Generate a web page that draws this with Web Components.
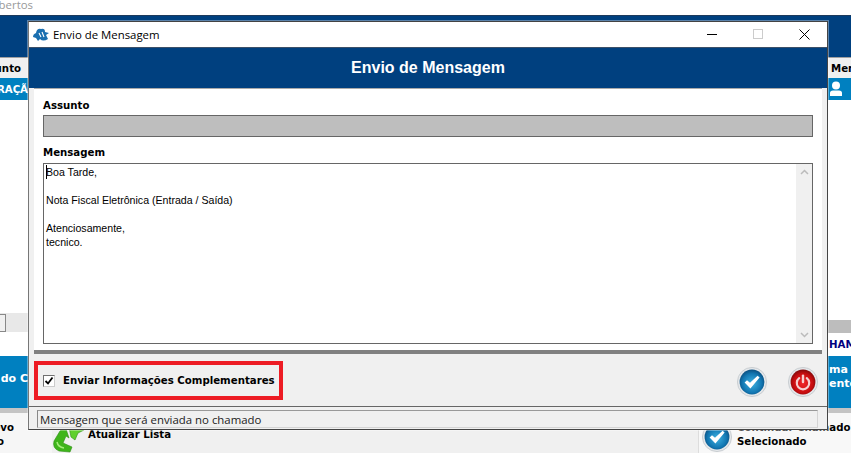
<!DOCTYPE html>
<html lang="pt-BR">
<head>
<meta charset="utf-8">
<title>Envio de Mensagem</title>
<style>
  html, body { margin: 0; padding: 0; background: #fff; }
  body { width: 851px; height: 453px; overflow: hidden; position: relative; font-family: "Liberation Sans", sans-serif; }
</style>
</head>
<body>
<app-backdrop></app-backdrop>
<message-dialog></message-dialog>

<script>
// round glossy button, blue check or red power
class RoundIcon extends HTMLElement {
  connectedCallback() {
    const kind = this.getAttribute("kind") || "ok";
    const glyph = kind === "ok"
      ? `<path d="M7.6 15.4 L10 13.2 L13 15.8 L20.6 8.8 L22.6 10.6 L13.4 21.4 Z" fill="#fff"/>`
      : `<path d="M11.2 11.2 A6.2 6.2 0 1 0 18.8 11.2" fill="none" stroke="#f6d0d0" stroke-width="2.2" stroke-linecap="round"/><path d="M15 8.6 V15" stroke="#f6d0d0" stroke-width="2.4" stroke-linecap="round"/>`;
    const stops = kind === "ok" ? ["#3fb2e2", "#1277b2", "#0a4f80"] : ["#f0282a", "#c80d10", "#800a0b"];
    const id = "g" + kind;
    this.attachShadow({ mode: "open" }).innerHTML = `
      <style>
        :host { display: block; width: 30px; height: 30px; flex: none; }
        svg { display: block; }
      </style>
      <svg width="30" height="30" viewBox="0 0 30 30">
        <defs>
          <radialGradient id="${id}" cx="50%" cy="55%" r="55%">
            <stop offset="0" stop-color="${stops[0]}"/>
            <stop offset=".7" stop-color="${stops[1]}"/>
            <stop offset="1" stop-color="${stops[2]}"/>
          </radialGradient>
        </defs>
        <circle cx="15" cy="15" r="14.6" fill="#e4e7ea" stroke="#bcc1c5" stroke-width=".7"/>
        <circle cx="15" cy="15" r="12.4" fill="url(#${id})"/>
        ${glyph}
      </svg>`;
  }
}
customElements.define("round-icon", RoundIcon);

// the main application window behind the dialog
class AppBackdrop extends HTMLElement {
  constructor() {
    super();
    this.attachShadow({ mode: "open" }).innerHTML = `
      <style>
        :host { display: flex; flex-direction: column; width: 851px; height: 453px; font: bold 10.2px "DejaVu Sans", sans-serif; color: #000; background: #fff; }
        .top { height: 15px; flex: none; font: 11.4px "Open Sans", sans-serif; color: #999; overflow: hidden; }
        .top div { width: 33px; overflow: hidden; display: flex; justify-content: flex-end; line-height: 9px; white-space: nowrap; }
        .band { height: 42px; flex: none; background: #00407f; border-top: 1px solid #1d3a5c; box-sizing: border-box; }
        .table { height: 351px; flex: none; display: flex; justify-content: space-between; }
        .col { display: flex; flex-direction: column; overflow: hidden; white-space: nowrap; }
        .col.l { width: 28px; align-items: flex-end; }
        .col.r { width: 23px; align-items: flex-start; }
        .col > div { flex: none; box-sizing: border-box; width: 100%; display: flex; align-items: center; }
        .col.l > div { justify-content: flex-end; }
        .head { height: 21px; background: #f0f0f0; border-top: 1px solid #a0a0a0; }
        .l .head { padding-right: 7px; }
        .r .head { padding-left: 3px; }
        .sel { height: 22px; background: #0080c0; color: #fff; }
        .grow { flex: 1 !important; background: #fff; }
        .hscroll { height: 19px; background: #e8e8e8; }
        .hscroll i { display: block; width: 6px; height: 18px; margin-right: auto; background: #f0f0f0; border: 1px solid #888; border-left: 0; box-sizing: border-box; }
        .l .hscroll { justify-content: flex-start !important; }
        .grayrow { height: 13px; background: #bdbdbd; }
        .whiterow { height: 23px; background: #fff; color: #00007f; padding-left: 1px; }
        .promo { height: 52px; background: #0080c0; color: #fff; font-size: 11px; line-height: 14px; }
        .promo span { display: block; }
        .r .promo { display: block; padding: 7px 0 0 1px; }
        .l .promo { padding-bottom: 6px; }
        .foot { flex: 1; display: flex; background: #f0f0f0; border-top: 5px solid #c4c4c4; box-sizing: border-box; line-height: 14px; min-height: 0; }
        .new { width: 52px; flex: none; background: #f6f6f6; padding-top: 8px; box-sizing: border-box; display: flex; flex-direction: column; }
        .new div { overflow: hidden; display: flex; justify-content: flex-end; white-space: nowrap; }
        .refresh { display: flex; align-items: flex-start; gap: 3px; flex: 1; }
        .refresh svg { flex: none; margin-top: 12px; }
        .refresh span { padding-top: 15px; }
        .cont { width: 153px; flex: none; display: flex; gap: 5px; padding: 8px 0 0 3px; background: #f8f8f8; box-sizing: border-box; border-left: 1px solid #ddd; white-space: nowrap; }
        .cont round-icon { margin-top: 1px; }
      </style>
      <div class="top"><div>Abertos</div></div>
      <div class="band"></div>
      <div class="table">
        <div class="col l">
          <div class="head">Assunto</div>
          <div class="sel">ALTERAÇÃ</div>
          <div class="grow"></div>
          <div class="hscroll"><i></i></div>
          <div style="height:24px"></div>
          <div class="promo">o do C</div>
        </div>
        <div class="col r">
          <div class="head">Mensagem</div>
          <div class="sel">
            <svg width="14" height="16" viewBox="0 0 14 16" style="margin-left:1px"><circle cx="7" cy="4.5" r="4" fill="#fff"/><path d="M1 15 V12 Q1 9.5 4 9.5 H10 Q13 9.5 13 12 V15 Z" fill="#fff"/></svg>
          </div>
          <div class="grow"></div>
          <div class="grayrow"></div>
          <div class="whiterow">HAMADO</div>
          <div class="promo"><span>ma M</span><span>ente</span></div>
        </div>
      </div>
      <div class="foot">
        <div class="new"><div style="width:14px">Novo</div><div style="width:4px">o</div></div>
        <div class="refresh">
          <svg width="33" height="28" viewBox="0 0 33 28">
            <path d="M13 1 L8 6 L2 16 Q0 23 7 26 L18 27 L20 22 L11 18 L14 11 L17 13 Z" fill="#3fb51b" stroke="#2b8f12" stroke-width=".6"/>
            <path d="M17 2 L29 0 L32 5 L26 8 L23 15 L19 12 Z" fill="#5fd02c" stroke="#2b8f12" stroke-width=".6"/>
            <path d="M5 17 Q6 22 12 23" fill="none" stroke="#a5ec7a" stroke-width="1.5"/>
          </svg>
          <span>Atualizar Lista</span>
        </div>
        <div class="cont">
          <round-icon kind="ok"></round-icon>
          <span>Continuar Chamado<br>Selecionado</span>
        </div>
      </div>`;
  }
}
customElements.define("app-backdrop", AppBackdrop);

class MessageDialog extends HTMLElement {
  constructor() {
    super();
    this.attachShadow({ mode: "open" }).innerHTML = `
      <style>
        :host { position: absolute; left: 28px; top: 21px; width: 800px; height: 409px; box-sizing: border-box; display: flex; flex-direction: column; background: #f0f0f0; border: 1px solid #444; border-left-color: #777; font: bold 10.2px "DejaVu Sans", sans-serif; color: #000; box-shadow: 0 0 0 1px rgba(255,255,255,.35); }
        .titlebar { height: 25px; flex: none; background: #fff; display: flex; align-items: center; font: 11.4px "Open Sans", sans-serif; border-bottom: 1px solid #3c5068; box-sizing: content-box; }
        .titlebar svg.logo { margin: 0 4px 0 4px; flex: none; }
        .titlebar .name { flex: 1; }
        .wbtn { width: 46px; height: 25px; display: flex; align-items: center; justify-content: center; }
        .banner { height: 40px; flex: none; background: #00407f; color: #fff; font: bold 16px "Liberation Sans", sans-serif; display: flex; align-items: center; justify-content: center; }
        .body { flex: 1; display: flex; flex-direction: column; padding: 0 5px; min-height: 0; }
        .panel { height: 261px; flex: none; background: #fff; border-top: 1px solid #aaa; border-bottom: 4px solid #808080; padding: 0 9px; display: flex; flex-direction: column; box-sizing: content-box; }
        label { display: block; line-height: 13px; }
        .l1 { margin-top: 10px; }
        .subject { height: 22px; flex: none; margin-top: 3px; background: #bebebe; border: 1px solid #666; box-sizing: border-box; }
        .l2 { margin-top: 9px; }
        .memo { height: 181px; flex: none; margin-top: 4px; border: 1px solid #666; box-sizing: border-box; display: flex; background: #fff; }
        .text { flex: 1; padding: 1px 0 0 2px; font: 10.6px/14px "Liberation Sans", sans-serif; white-space: pre; position: relative; }
        .caret { position: absolute; left: 2px; top: 1px; width: 1px; height: 14px; background: #000; }
        .sb { width: 16px; flex: none; background: #f0f0f0; display: flex; flex-direction: column; justify-content: space-between; align-items: center; padding: 5px 0; box-sizing: border-box; }
        .actions { height: 52px; flex: none; display: flex; align-items: flex-start; justify-content: space-between; padding: 0 4px 0 0; }
        .mark { width: 249px; height: 39px; box-sizing: border-box; border: 4px solid #ed1c24; margin-top: 7px; display: flex; align-items: center; gap: 8px; padding-left: 5px; white-space: nowrap; }
        .box { width: 12px; height: 12px; border: 1px solid #707070; border-right-color: #ccc; border-bottom-color: #ccc; background: #fff; box-sizing: border-box; display: flex; flex: none; }
        .btns { display: flex; gap: 21px; margin-top: 13px; }
        .status { height: 23px; flex: none; border-top: 1px solid #666; padding: 3px 9px 0 8px; box-sizing: border-box; }
        .field { height: 18px; border: 1px solid #d4d4d4; border-left-color: #888; border-top-color: #999; box-sizing: border-box; padding-left: 2px; font: 400 11.4px/17px "Open Sans", sans-serif; color: #222; white-space: nowrap; }
      </style>
      <div class="titlebar">
        <svg class="logo" width="16" height="15" viewBox="0 0 16 15">
          <path d="M0 10 Q0 7 3 6 Q4 1 8 2 Q12 1 12 5 L16 6 L13 8 L15 12 Q10 15 7 12 L5 14 L3 11 Z" fill="#1a6fb0"/>
          <path d="M6 6 L8 10 M9 5 L11 10" stroke="#fff" stroke-width="1.1"/>
        </svg>
        <span class="name">Envio de Mensagem</span>
        <div class="wbtn"><svg width="11" height="11"><path d="M0 5.5 H10" stroke="#000"/></svg></div>
        <div class="wbtn"><svg width="11" height="11"><rect x=".5" y=".5" width="9" height="9" fill="none" stroke="#ccc"/></svg></div>
        <div class="wbtn"><svg width="11" height="11"><path d="M.5 .5 L10.5 10.5 M10.5 .5 L.5 10.5" stroke="#000"/></svg></div>
      </div>
      <div class="banner">Envio de Mensagem</div>
      <div class="body">
        <div class="panel">
          <label class="l1">Assunto</label>
          <div class="subject"></div>
          <label class="l2">Mensagem</label>
          <div class="memo">
            <div class="text"><span class="caret"></span>Boa Tarde,

Nota Fiscal Eletrônica (Entrada / Saída)

Atenciosamente,
tecnico.</div>
            <div class="sb">
              <svg width="9" height="6"><path d="M1 5 L4.5 1.5 L8 5" fill="none" stroke="#bbb" stroke-width="1.5"/></svg>
              <svg width="9" height="6"><path d="M1 1 L4.5 4.5 L8 1" fill="none" stroke="#bbb" stroke-width="1.5"/></svg>
            </div>
          </div>
        </div>
        <div class="actions">
          <div class="mark">
            <div class="box"><svg width="10" height="10"><path d="M1.5 5 L4 7.5 L8.5 1.5" fill="none" stroke="#000" stroke-width="1.8"/></svg></div>
            <span>Enviar Informações Complementares</span>
          </div>
          <div class="btns">
            <round-icon kind="ok"></round-icon>
            <round-icon kind="off"></round-icon>
          </div>
        </div>
      </div>
      <div class="status"><div class="field">Mensagem que será enviada no chamado</div></div>`;
  }
}
customElements.define("message-dialog", MessageDialog);
</script>
</body>
</html>
